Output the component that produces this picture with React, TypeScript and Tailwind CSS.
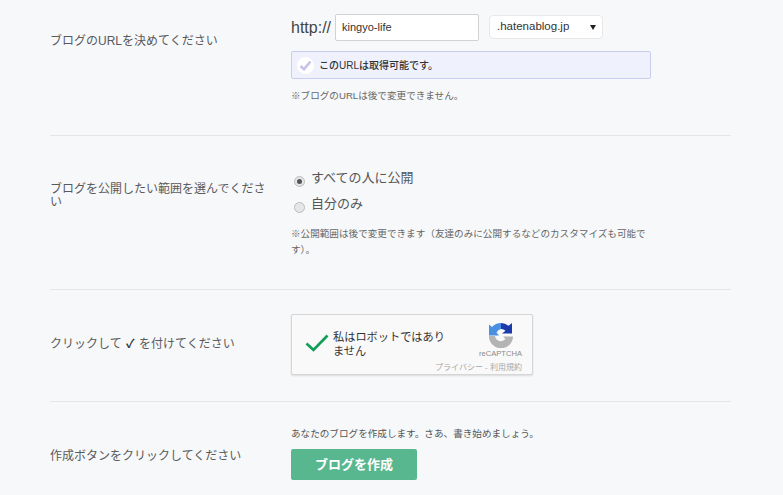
import React from 'react';

const Row: React.FC<{ label: React.ReactNode; labelTop: string; className: string; children: React.ReactNode }> = ({
  label,
  labelTop,
  className,
  children,
}) => (
  <div className={`flex border-b border-[#e4e6e8] ${className}`}>
    <div className="w-[241px] shrink-0">
      <div className={`w-[222px] text-[12px] leading-[13px] text-[#5a5a5a] ${labelTop}`}>{label}</div>
    </div>
    <div className="flex-1">{children}</div>
  </div>
);

const Radio: React.FC<{ checked?: boolean }> = ({ checked }) => (
  <span className="mt-[8px] flex h-[11px] w-[11px] items-center justify-center rounded-full border border-[#bdbdbd] bg-[#e6e6e6]">
    {checked && <span className="h-[5px] w-[5px] rounded-full bg-[#555]" />}
  </span>
);

export default function App() {
  return (
    <div
      className="h-[495px] w-[783px] overflow-hidden bg-[#f6f8fa] pl-[50px] pr-[52px]"
      style={{ fontFamily: '"Liberation Sans", "Noto Sans CJK JP", sans-serif' }}
    >
      <Row label="ブログのURLを決めてください" labelTop="pt-[35px]" className="h-[136px]">
        <div className="flex items-center pt-[13px]">
          <span className="pt-[1px] text-[16px] leading-[27px] text-[#444]">http://</span>
          <div className="ml-[4px] flex h-[27px] w-[144px] items-center rounded-[2px] border border-[#d0d3d6] bg-white pl-[6px] text-[11px] text-[#333]">
            kingyo-life
          </div>
          <div className="ml-[10px] flex h-[24px] w-[114px] items-center justify-between rounded-[4px] border border-[#e6e8ea] bg-white pl-[7px] pr-[6px] text-[11.5px] text-[#333]">
            <span>.hatenablog.jp</span>
            <span className="h-0 w-0 border-x-[3px] border-t-[5px] border-x-transparent border-t-[#222]" />
          </div>
        </div>
        <div className="mt-[10px] flex h-[28px] w-[360px] items-center rounded-[2px] border border-[#c9cdf0] bg-[#eff1fd] pl-[5px] text-[10px] font-medium text-[#333]">
          <span className="flex h-[17px] w-[17px] items-center justify-center rounded-full bg-white">
            <svg width="13" height="11" viewBox="0 0 13 11">
              <path d="M1.5 6 L5 9.2 L11.5 1.5" fill="none" stroke="#c9c2ea" strokeWidth="2.6" />
            </svg>
          </span>
          <span className="ml-[5px]">このURLは取得可能です。</span>
        </div>
        <p className="mt-[10px] text-[9.6px] leading-[14px] text-[#666]">※ブログのURLは後で変更できません。</p>
      </Row>

      <Row label="ブログを公開したい範囲を選んでください" labelTop="pt-[47px]" className="h-[154px]">
        <div className="flex items-start pl-[3px] pt-[32px] text-[13px] leading-[20px] text-[#555]">
          <Radio checked />
          <span className="ml-[6px]">すべての人に公開</span>
        </div>
        <div className="mt-[6px] flex items-start pl-[3px] text-[13px] leading-[20px] text-[#555]">
          <Radio />
          <span className="ml-[6px]">自分のみ</span>
        </div>
        <p className="mt-[12px] w-[360px] text-[9.6px] leading-[16px] text-[#666]">
          ※公開範囲は後で変更できます（友達のみに公開するなどのカスタマイズも可能です）。
        </p>
      </Row>

      <Row
        label={<>クリックして <span className="mx-[1px] font-bold text-[#333]">✓</span> を付けてください</>}
        labelTop="pt-[48px]"
        className="h-[112px]"
      >
        <div className="mt-[24px] flex h-[61px] w-[242px] flex-col rounded-[2px] border border-[#d6d6d6] bg-[#f9f9f9] shadow-[0_1px_2px_rgba(0,0,0,0.12)]">
          <div className="flex h-[47px]">
            <svg className="ml-[13px] mt-[18px] shrink-0" width="24" height="20" viewBox="0 0 24 20">
              <path d="M1.5 10.5 L8.5 17 L22.5 2.5" fill="none" stroke="#0f9d58" strokeWidth="2.6" />
            </svg>
            <div className="ml-[4px] mt-[15px] w-[116px] shrink-0 text-[11.2px] leading-[14px] text-[#333]">
              私はロボットではありません
            </div>
            <div className="flex flex-1 flex-col items-center pl-[27px] pr-[7px] pt-[7px]">
              <svg width="26" height="26" viewBox="0 0 26 26">
                <path d="M1 14 H7 A6 6 0 0 0 17.5 17 L15 14.5 H25 A12 12 0 0 1 1 14Z" fill="#b4b4b4" />
                <path d="M13 1 A12 12 0 0 0 4 5 L1 2.5 V13.5 H11 L8.5 10.5 A6 6 0 0 1 13 7Z" fill="#4a90e2" />
                <path d="M13 1 A12 12 0 0 1 20.5 3.8 L24 1 V11.5 H14 L17.5 8.8 A6 6 0 0 0 13 7Z" fill="#1c3aa9" />
              </svg>
              <span className="mt-[1px] whitespace-nowrap text-[7.6px] leading-[10px] text-[#8a8a8a]">reCAPTCHA</span>
            </div>
          </div>
          <div className="whitespace-nowrap pr-[10px] pt-[1px] text-right text-[8px] leading-[10px] text-[#a8a8a8]">プライバシー - 利用規約</div>
        </div>
      </Row>

      <div className="flex">
        <div className="w-[241px] shrink-0 pt-[48px] text-[12px] leading-[13px] text-[#5a5a5a]">作成ボタンをクリックしてください</div>
        <div>
          <p className="pt-[25px] text-[9.6px] leading-[14px] text-[#555]">あなたのブログを作成します。さあ、書き始めましょう。</p>
          <div className="mt-[8px] flex h-[31px] w-[126px] items-center justify-center rounded-[2px] bg-[#58b78f] text-[13px] font-bold text-white">
            ブログを作成
          </div>
        </div>
      </div>
    </div>
  );
}
